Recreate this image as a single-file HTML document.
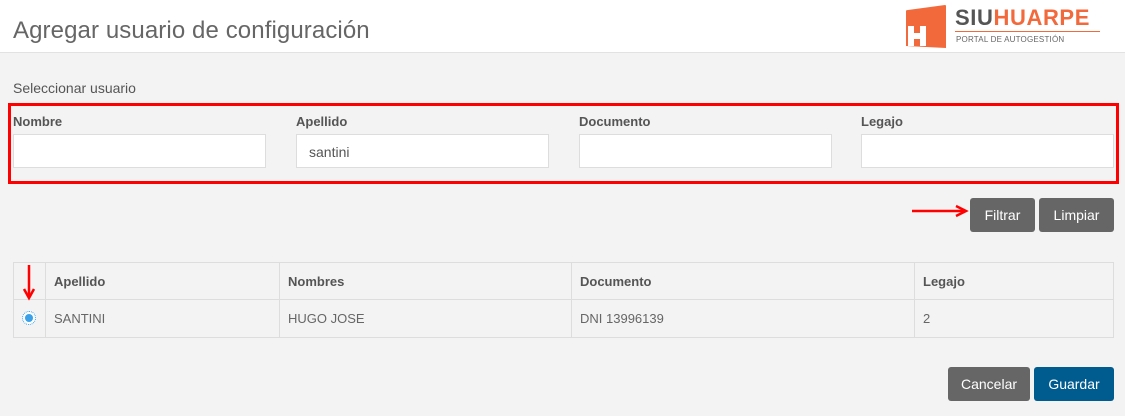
<!DOCTYPE html>
<html><head><meta charset="utf-8"><style>
*{box-sizing:border-box;margin:0;padding:0}
body{width:1125px;height:416px;background:#f3f3f3;font-family:"Liberation Sans",sans-serif;position:relative;overflow:hidden;color:#555}
.hdr{position:absolute;left:0;top:0;width:1125px;height:53px;background:#fff;border-bottom:1px solid #e2e2e2}
.title{position:absolute;left:13px;top:17px;font-size:24px;color:#666;font-weight:normal;letter-spacing:0.1px}
.abs{position:absolute}
.lbl{position:absolute;font-size:13px;font-weight:bold;color:#555}
.inp{position:absolute;top:134px;width:253px;height:34px;background:#fff;border:1px solid #ddd;font-size:14px;color:#555;padding:9px 12px}
.btn{position:absolute;height:34px;background:#666;color:#fff;font-size:14px;border-radius:3px;text-align:center;line-height:34px}
table{position:absolute;left:13px;top:262px;width:1101px;border-collapse:collapse;font-size:13px}
td,th{border:1px solid #ddd;text-align:left;padding:0 8px;color:#555}
th{height:37px;font-weight:bold}
td{height:38px;color:#666}
</style></head><body>
<div class="hdr">
<div class="title">Agregar usuario de configuración</div>
<svg class="abs" style="left:905px;top:3px" width="44" height="48" viewBox="0 0 44 48"><path d="M1 8 Q1 7 3 7 L40 2 Q41 2 41 3 L41 45 L1 43 Z" fill="#f26a3c"/><path d="M3 23 h6 v7 h6 v-7 h6 v20 h-6 v-7 h-6 v7 h-6 Z" fill="#fff"/></svg>
<div class="abs" style="left:955px;top:6px;font-size:22px;font-weight:bold;line-height:24px;letter-spacing:0.6px"><span style="color:#555">SIU</span><span style="color:#f26a3c">HUARPE</span></div>
<div class="abs" style="left:955px;top:31px;width:145px;height:1px;background:#f26a3c"></div>
<div class="abs" style="left:956px;top:35px;font-size:8px;color:#666;letter-spacing:0.2px">PORTAL DE AUTOGESTIÓN</div>
</div>
<div class="abs" style="left:13px;top:80px;font-size:14px;color:#555">Seleccionar usuario</div>
<div class="abs" style="left:8px;top:103px;width:1111px;height:81px;border:3px solid #f00"></div>
<div class="lbl" style="left:13px;top:114px">Nombre</div>
<div class="lbl" style="left:296px;top:114px">Apellido</div>
<div class="lbl" style="left:579px;top:114px">Documento</div>
<div class="lbl" style="left:861px;top:114px">Legajo</div>
<div class="inp" style="left:13px"></div>
<div class="inp" style="left:296px">santini</div>
<div class="inp" style="left:579px"></div>
<div class="inp" style="left:861px;width:253px"></div>
<svg class="abs" style="left:910px;top:204px" width="60" height="14"><path d="M2 7 H54" stroke="#f00" stroke-width="2.5"/><path d="M46 2 L56 7 L46 12" stroke="#f00" stroke-width="2.5" fill="none"/></svg>
<div class="btn" style="left:970px;top:198px;width:65px">Filtrar</div>
<div class="btn" style="left:1039px;top:198px;width:75px">Limpiar</div>
<table>
<tr><th style="width:32px"></th><th style="width:234px">Apellido</th><th style="width:292px">Nombres</th><th style="width:343px">Documento</th><th>Legajo</th></tr>
<tr><td></td><td>SANTINI</td><td>HUGO JOSE</td><td>DNI 13996139</td><td>2</td></tr>
</table>
<svg class="abs" style="left:22px;top:264px" width="14" height="38"><path d="M7 1 V33" stroke="#f00" stroke-width="2.5"/><path d="M2 25 L7 34 L12 25" stroke="#f00" stroke-width="2.5" fill="none"/></svg>
<div class="abs" style="left:22px;top:311px;width:14px;height:14px;border-radius:50%;border:1px dotted #3aa0e8;background:#fff"></div>
<div class="abs" style="left:25px;top:314px;width:8px;height:8px;border-radius:50%;background:#3aa0e8"></div>
<div class="btn" style="left:948px;top:367px;width:82px">Cancelar</div>
<div class="btn" style="left:1034px;top:367px;width:80px;background:#005b8f">Guardar</div>
</body></html>
